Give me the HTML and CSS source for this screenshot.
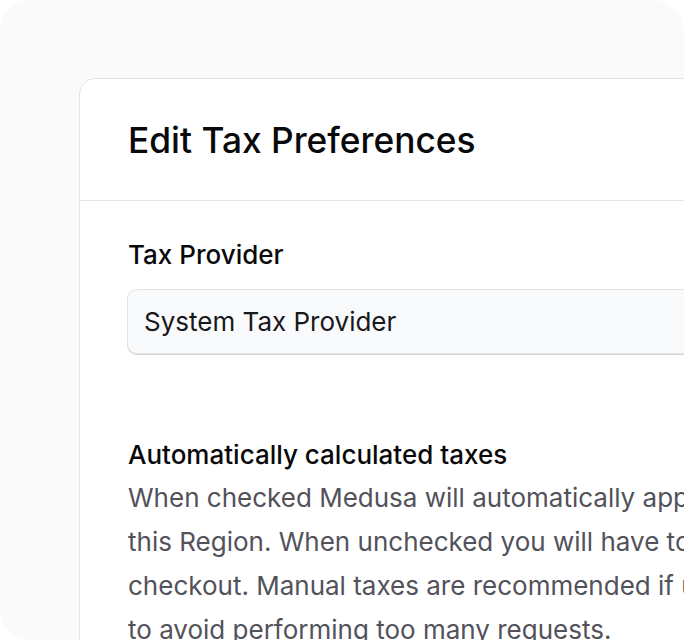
FILE: index.html
```html
<!DOCTYPE html>
<html>
<head>
<meta charset="utf-8">
<link rel="stylesheet" href="styles.css">
</head>
<body>
<div class="frame">
  <div class="card">
    <div class="card-header">
      <h1 class="title">Edit Tax Preferences</h1>
    </div>
    <div class="card-body">
      <label class="label">Tax Provider</label>
      <div class="select">System Tax Provider</div>
      <div class="section">
        <div class="section-title">Automatically calculated taxes</div>
        <p class="desc">When checked Medusa will automatically apply tax calculations to Carts in<br>this Region. When unchecked you will have to manually compute taxes at<br>checkout. Manual taxes are recommended if using a 3rd party tax provider<br>to avoid performing too many requests.</p>
      </div>
    </div>
  </div>
</div>
</body>
</html>
```
FILE: styles.css
```css
* { box-sizing: border-box; }
html, body { margin: 0; padding: 0; background: #ffffff; }
body { font-family: Inter, "Noto Sans", sans-serif; color: #111113; }
.frame {
  width: 684px;
  height: 640px;
  background: #fafafa;
  border-radius: 32px;
  overflow: hidden;
  padding: 78px 0 0 79px;
}
.card {
  width: 1000px;
  height: 700px;
  background: #ffffff;
  border: 1px solid #e4e4e7;
  border-radius: 16px;
}
.card-header {
  height: 122px;
  padding: 0 48px;
  border-bottom: 1px solid #e4e4e7;
  display: flex;
  align-items: center;
}
.title {
  margin: 3px 0 0 0;
  font-size: 35.3px;
  font-weight: 500;
  line-height: 42px;
  color: #09090b;
}
.card-body {
  padding: 40px 48px 0 48px;
}
.label {
  display: block;
  font-size: 26px;
  font-weight: 500;
  line-height: 28px;
  color: #09090b;
}
.select {
  margin-top: 20px;
  height: 65px;
  width: 800px;
  margin-left: -1px;
  background: #f9fafb;
  border: 1px solid #e4e4e7;
  border-radius: 10px;
  box-shadow: 0 1px 0 #d4d4d8;
  padding: 0 16px;
  display: flex;
  align-items: center;
  font-size: 26px;
  color: #18181b;
}
.section { margin-top: 86px; }
.section-title {
  font-size: 26px;
  font-weight: 500;
  line-height: 30px;
  color: #09090b;
}
.desc {
  margin: 6px 0 0 0;
  font-size: 26px;
  line-height: 44px;
  color: #52525b;
  white-space: nowrap;
}
```
